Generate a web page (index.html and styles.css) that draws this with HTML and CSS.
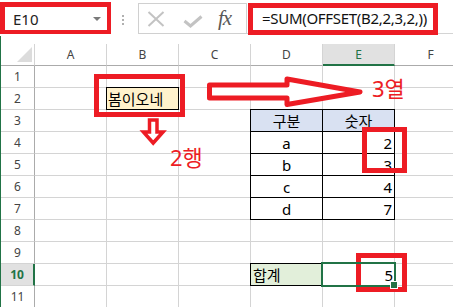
FILE: index.html
```html
<!DOCTYPE html>
<html lang="ko">
<head>
<meta charset="utf-8">
<link rel="stylesheet" href="styles.css">
</head>
<body>
<div class="app">
  <div class="topbar">
    <div class="namebox"><span>E10</span><i class="dd"></i></div>
    <div class="dots"><i></i><i></i><i></i></div>
    <div class="btns">
      <svg class="ico-x" width="18" height="16" viewBox="0 0 18 16"><path d="M1.5 1 L16.5 15 M16.5 1 L1.5 15" stroke="#c3c3c3" stroke-width="2" fill="none"/></svg>
      <svg class="ico-ok" width="20" height="13" viewBox="0 0 20 13"><path d="M1.5 6 L7.5 11 L18.5 1.5" stroke="#c3c3c3" stroke-width="3" fill="none"/></svg>
      <span class="fx">fx</span>
    </div>
    <div class="formula">=SUM(OFFSET(B2,2,3,2,))</div>
  </div>
  <div class="sheet">
    <div class="grid">
      <div class="h corner"><i class="tri"></i></div><div class="h">A</div><div class="h">B</div><div class="h">C</div><div class="h">D</div><div class="h selc">E</div><div class="h">F</div>

      <div class="rh">1</div><div class="c"></div><div class="c"></div><div class="c"></div><div class="c"></div><div class="c"></div><div class="c"></div>

      <div class="rh">2</div><div class="c"></div><div class="c bx yel">봄이오네</div><div class="c"></div><div class="c"></div><div class="c"></div><div class="c"></div>

      <div class="rh">3</div><div class="c"></div><div class="c"></div><div class="c"></div><div class="c bx blu ctr">구분</div><div class="c bx blu ctr">숫자</div><div class="c"></div>

      <div class="rh">4</div><div class="c"></div><div class="c"></div><div class="c"></div><div class="c bx ctr">a</div><div class="c bx num">2</div><div class="c"></div>

      <div class="rh">5</div><div class="c"></div><div class="c"></div><div class="c"></div><div class="c bx ctr">b</div><div class="c bx num">3</div><div class="c"></div>

      <div class="rh">6</div><div class="c"></div><div class="c"></div><div class="c"></div><div class="c bx ctr">c</div><div class="c bx num">4</div><div class="c"></div>

      <div class="rh">7</div><div class="c"></div><div class="c"></div><div class="c"></div><div class="c bx ctr">d</div><div class="c bx num">7</div><div class="c"></div>

      <div class="rh">8</div><div class="c"></div><div class="c"></div><div class="c"></div><div class="c"></div><div class="c"></div><div class="c"></div>

      <div class="rh">9</div><div class="c"></div><div class="c"></div><div class="c"></div><div class="c"></div><div class="c"></div><div class="c"></div>

      <div class="rh selr">10</div><div class="c"></div><div class="c"></div><div class="c"></div><div class="c bx grn">합계</div><div class="c act num">5</div><div class="c"></div>

      <div class="rh">11</div><div class="c"></div><div class="c"></div><div class="c"></div><div class="c"></div><div class="c"></div><div class="c"></div>
    </div>
  </div>

  <div class="mark m1"></div>
  <div class="mark m2"></div>
  <div class="mark m3"></div>
  <div class="mark m4"></div>
  <div class="mark m5"></div>

  <svg class="arrows" width="453" height="307" viewBox="0 0 453 307">
    <polygon points="209.5,85 287,85 287,79 360,92 287,104.5 287,98 209.5,98" fill="#fff" stroke="#ed1c24" stroke-width="5" stroke-linejoin="round"/>
    <polygon points="149.5,120 157,120 157,132 163,132 153.2,143 143.4,132 149.5,132" fill="#fff" stroke="#ed1c24" stroke-width="3.5" stroke-linejoin="miter"/>
  </svg>

  <div class="note n1">2행</div>
  <div class="note n2">3열</div>
</div>
</body>
</html>
```

FILE: styles.css
```css
* { box-sizing: border-box; }
html, body { margin: 0; padding: 0; }
body {
  width: 453px;
  height: 307px;
  overflow: hidden;
  background: #fff;
  font-family: "Noto Sans", "Noto Sans CJK KR", sans-serif;
}
.app {
  position: relative;
  width: 453px;
  height: 307px;
  overflow: hidden;
}

/* formula bar */
.topbar {
  height: 36px;
  display: flex;
  align-items: flex-start;
  padding-top: 3px;
}
.namebox {
  margin-left: 3px;
  margin-top: 2px;
  width: 106px;
  height: 27px;
  border: 1px solid #c6c6c6;
  display: flex;
  align-items: center;
  padding-left: 9px;
  font-size: 15px;
  color: #222;
}
.dd {
  margin-left: auto;
  margin-right: 7px;
  width: 0;
  height: 0;
  border-left: 4px solid transparent;
  border-right: 4px solid transparent;
  border-top: 4px solid #7a7a7a;
}
.dots {
  margin-left: 13px;
  margin-top: 12px;
  display: flex;
  flex-direction: column;
  gap: 2px;
}
.dots i {
  display: block;
  width: 2px;
  height: 2px;
  background: #b0b0b0;
}
.btns {
  margin-left: 14px;
  width: 109px;
  height: 31px;
  border: 1px solid #d0d0d0;
  display: flex;
  align-items: center;
  padding-left: 8px;
}
.ico-x { margin-top: 1px; }
.ico-ok { margin-left: 18px; margin-top: 6px; }
.fx {
  margin-left: 15px;
  font-family: "Liberation Serif", serif;
  font-style: italic;
  font-size: 21px;
  color: #595959;
  letter-spacing: -1px;
}
.formula {
  flex: 1;
  height: 31px;
  border-bottom: 1px solid #d4d4d4;
  padding-left: 15px;
  font-size: 15px;
  letter-spacing: -0.3px;
  line-height: 30px;
  color: #111;
  white-space: nowrap;
}

/* sheet */
.sheet {
  height: 271px;
  border-left: 1px solid #217346;
  padding-top: 8px;
  overflow: hidden;
}
.grid {
  display: grid;
  grid-template-columns: 34px repeat(6, 72px);
  grid-auto-rows: 22px;
  width: 466px;
}
.h {
  border-right: 1px solid #d4d4d4;
  border-bottom: 1px solid #ababab;
  font-size: 12px;
  color: #444;
  display: flex;
  align-items: center;
  justify-content: center;
}
.corner {
  justify-content: flex-end;
  align-items: flex-end;
  padding: 0 2px 3px 0;
}
.tri {
  width: 0;
  height: 0;
  border-left: 15px solid transparent;
  border-bottom: 15px solid #dcdcdc;
}
.selc {
  background: #e1e1e1;
  border-bottom: 2px solid #217346;
  color: #217346;
}
.rh {
  border-right: 1px solid #ababab;
  border-bottom: 1px solid #d4d4d4;
  font-size: 12px;
  color: #444;
  display: flex;
  align-items: center;
  justify-content: center;
}
.selr {
  background: #e1e1e1;
  border-right: 2px solid #217346;
  color: #217346;
  font-weight: bold;
}
.c {
  position: relative;
  border-right: 1px solid #d4d4d4;
  border-bottom: 1px solid #d4d4d4;
  font-size: 15px;
  color: #000;
  display: flex;
  align-items: center;
  padding: 0 2px;
  white-space: nowrap;
}
.ctr { justify-content: center; }
.num { justify-content: flex-end; padding-right: 2px; }
.bx {
  margin: -1px 0 0 -1px;
  border: 1px solid #000;
}
.yel { background: #fff2cc; padding-left: 1px; }
.blu { background: #d9e1f2; }
.grn { background: #e2efda; }
.act {
  margin: -2px -1px -1px -2px;
  border: 2px solid #217346;
  z-index: 2;
  padding-right: 1px;
}
.act::after {
  content: "";
  position: absolute;
  right: -4px;
  bottom: -4px;
  width: 6px;
  height: 6px;
  background: #217346;
  border: 1px solid #fff;
}

/* annotations */
.mark {
  position: absolute;
  border: 5px solid #ed1c24;
}
.m1 { left: 0; top: 2px; width: 111px; height: 32px; border-width: 5px 4px 4px 5px; }
.m2 { left: 248px; top: 3px; width: 190px; height: 32px; }
.m3 { left: 94px; top: 74px; width: 91px; height: 43px; }
.m4 { left: 362px; top: 127px; width: 45px; height: 46px; }
.m5 { left: 356px; top: 253px; width: 51px; height: 39px; }
.arrows {
  position: absolute;
  left: 0;
  top: 0;
}
.note {
  position: absolute;
  color: #ed1c24;
  font-size: 22px;
  line-height: 1;
  white-space: nowrap;
}
.n1 { left: 170px; top: 146px; }
.n2 { left: 372px; top: 77px; }
```
